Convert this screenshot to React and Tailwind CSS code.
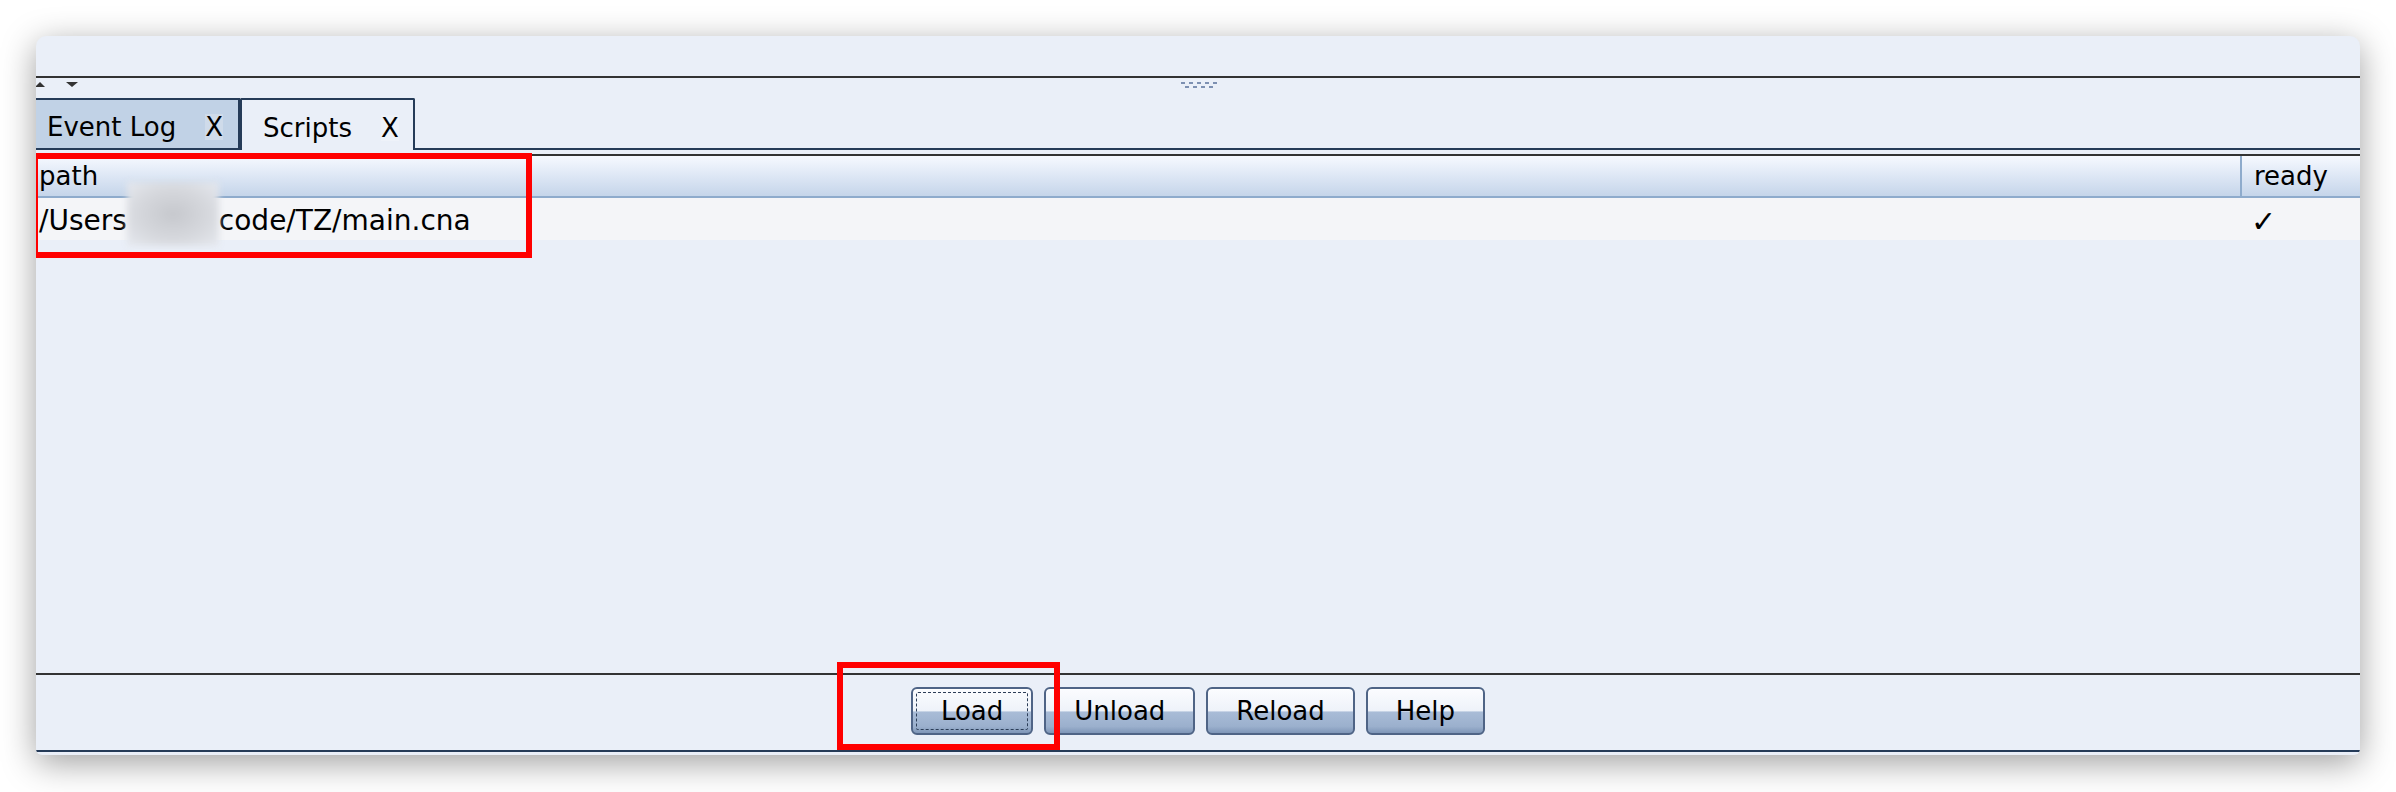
import React from 'react';

// Панель скриптов (Java Swing, macOS) — вкладки, таблица и кнопки

const font = { fontFamily: '"DejaVu Sans", "Liberation Sans", sans-serif' };

const buttons = ['Load', 'Unload', 'Reload', 'Help'];

const Tab = ({ label, active }) => (
    <div
        className={
            active
                ? 'flex h-full items-center pt-[5px] pl-[21px] pr-[14px] bg-[#eaeff8] border-t-2 border-x-2 border-[#253b58] rounded-t-[2px]'
                : 'flex h-full items-center pt-[5px] pl-[11px] pr-[15px] bg-[#c1d2e6] border-t-2 border-r-2 border-b-2 border-[#253b58]'
        }
    >
        <span className="text-[26px] leading-none text-black">{label}</span>
        <span
            className={
                active
                    ? 'ml-[29px] text-[26px] leading-none text-black bg-[#eef2f9]'
                    : 'ml-[29px] text-[26px] leading-none text-black bg-[#cfdbea]'
            }
        >
            X
        </span>
    </div>
);

const SwingButton = ({ label, focused }) => (
    <button
        className="relative h-[48px] px-[28px] rounded-[6px] border-2 border-[#4f6486] text-[26px] leading-none text-black bg-[linear-gradient(to_bottom,#fbfcff_0%,#eef2f9_50%,#a9bcd7_52%,#9bb0cd_85%,#7f96b8_100%)] shadow-[inset_0_1px_0_#ffffff]"
        style={font}
    >
        {focused && (
            <span className="pointer-events-none absolute inset-[3px] border border-dashed border-[#2c3e58] rounded-[2px]" />
        )}
        <span className="relative">{label}</span>
    </button>
);

const GripDots = () => (
    <div className="flex flex-col items-center gap-[2px]">
        <div className="flex gap-[4px]">
            {[0, 1, 2, 3, 4].map(i => (
                <span key={i} className="w-[4px] h-[2px] bg-[#7d90b2]" />
            ))}
        </div>
        <div className="flex gap-[4px]">
            {[0, 1, 2, 3].map(i => (
                <span key={i} className="w-[4px] h-[2px] bg-[#7d90b2]" />
            ))}
        </div>
    </div>
);

const App = () => {
    return (
        <div className="w-[2396px] h-[792px] bg-white pt-[36px] pl-[36px] overflow-hidden" style={font}>
            <div className="relative w-[2324px] h-[719px] flex flex-col bg-[#eaeff8] rounded-t-[10px] rounded-b-[6px] overflow-hidden shadow-[0_8px_34px_rgba(0,0,0,0.38)]">
                {/* --- верхняя пустая область --- */}
                <div className="h-[40px] shrink-0" />
                <div className="h-[2px] shrink-0 bg-[#333333]" />

                {/* --- разделитель split pane --- */}
                <div className="relative h-[20px] shrink-0 flex items-start pt-[4px]">
                    <div className="flex items-center gap-[21px] -ml-[1px]">
                        <span className="w-0 h-0 border-x-[5px] border-x-transparent border-b-[5px] border-b-[#333333]" />
                        <span className="w-0 h-0 border-x-[6px] border-x-transparent border-t-[5px] border-t-[#333333]" />
                    </div>
                    <div className="flex-1 flex justify-center pr-[40px]">
                        <GripDots />
                    </div>
                </div>

                {/* --- вкладки --- */}
                <div className="h-[52px] shrink-0 flex items-stretch">
                    <Tab label="Event Log" />
                    <Tab label="Scripts" active />
                    <div className="flex-1 border-b-2 border-[#253b58]" />
                </div>
                <div className="h-[4px] shrink-0" />

                {/* --- таблица --- */}
                <div className="h-[2px] shrink-0 bg-[#333333]" />
                <div className="h-[42px] shrink-0 flex bg-[linear-gradient(to_bottom,#f6f9ff,#c5d5ea)] border-b-2 border-[#8eabcc] text-[26px] text-black">
                    <div className="flex-1 flex items-center pl-[3px]">path</div>
                    <div className="w-[120px] flex items-center pl-[12px] border-l-2 border-[#8eabcc]">ready</div>
                </div>
                <div className="h-[42px] shrink-0 flex bg-[#f4f5f8] text-[28px] text-black">
                    <div className="flex-1 flex items-center pl-[3px] pt-[4px]">
                        <span>/Users</span>
                        <span className="relative inline-block w-[92px] h-full">
                            <span className="absolute left-0 right-0 -top-[20px] -bottom-[6px] bg-[radial-gradient(ellipse_at_center,#c6c8cd_0%,#d6d8dd_55%,#e6e9ef_100%)] blur-[3px]" />
                        </span>
                        <span>code/TZ/main.cna</span>
                    </div>
                    <div className="w-[120px] flex items-center pl-[11px] pt-[4px] text-[30px] font-bold">✓</div>
                </div>

                <div className="flex-1" />

                {/* --- кнопки --- */}
                <div className="h-[2px] shrink-0 bg-[#333333]" />
                <div className="h-[75px] shrink-0 flex justify-center items-start pt-[12px] gap-[11px]">
                    {buttons.map(b => (
                        <SwingButton key={b} label={b} focused={b === 'Load'} />
                    ))}
                </div>
                <div className="h-[2px] shrink-0 bg-[#253b58]" />
                <div className="h-[3px] shrink-0" />

                {/* --- красные рамки поверх скриншота --- */}
                <div className="absolute left-[-4px] top-[117px] w-[500px] h-[105px] border-[6px] border-[#ff0000]" />
                <div className="absolute left-[801px] top-[626px] w-[223px] h-[88px] border-[6px] border-[#ff0000]" />
            </div>
        </div>
    );
};

export default App;
